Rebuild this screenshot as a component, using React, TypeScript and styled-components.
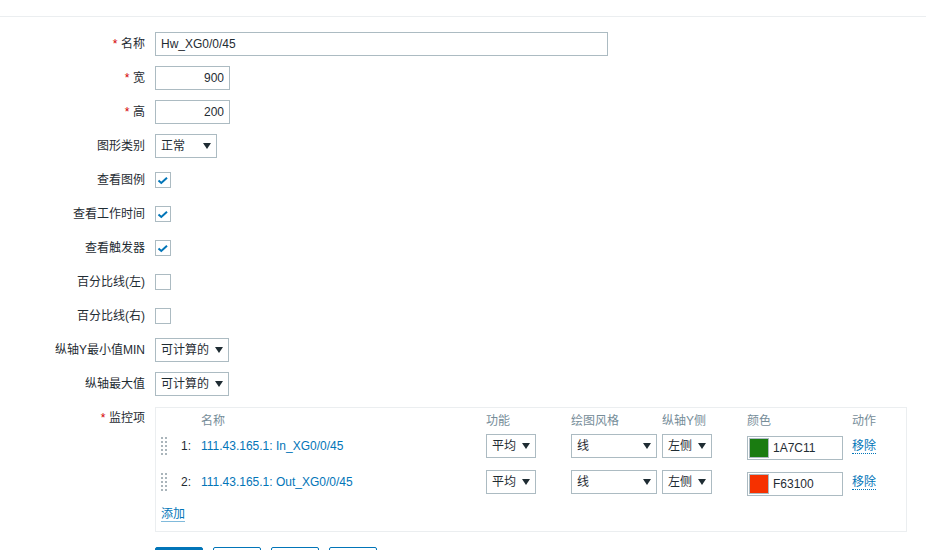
import React from 'react';
import styled, { createGlobalStyle, css } from 'styled-components';

const GlobalStyle = createGlobalStyle`
  body {
    margin: 0;
    background: #fff;
    font-family: "Liberation Sans", Arial, "Noto Sans CJK SC", sans-serif;
    font-size: 12px;
    color: #1f2c33;
  }
`;

const TopBar = styled.div`
  height: 16px;
  border-bottom: 1px solid #ebeef0;
`;

const Form = styled.ul`
  list-style: none;
  margin: 0;
  padding: 10px 0 0;
`;

const Row = styled.li<{ $top?: boolean }>`
  display: grid;
  grid-template-columns: 145px 1fr;
  column-gap: 10px;
  padding: 5px 0;
  align-items: ${(p) => (p.$top ? 'start' : 'center')};
`;

const Label = styled.label<{ $required?: boolean }>`
  text-align: right;
  line-height: 24px;
  white-space: nowrap;
  ${(p) =>
    p.$required &&
    css`
      &::before {
        content: '*';
        color: #d40000;
        margin-right: 0.3em;
      }
    `}
`;

const Field = styled.div`
  display: flex;
  align-items: center;
  min-height: 24px;
`;

const TextInput = styled.input<{ $width: number; $align?: string }>`
  box-sizing: border-box;
  width: ${(p) => p.$width}px;
  height: 24px;
  margin: 0;
  padding: 0 5px;
  border: 1px solid #acbbc2;
  background: #fff;
  font: inherit;
  color: #1f2c33;
  text-align: ${(p) => p.$align || 'left'};
  outline: none;
`;

const Select = styled.div<{ $width: number }>`
  position: relative;
  box-sizing: border-box;
  width: ${(p) => p.$width}px;
  height: 24px;
  padding: 0 18px 0 5px;
  border: 1px solid #acbbc2;
  background: #fff;
  line-height: 22px;
  white-space: nowrap;

  &::after {
    content: '';
    position: absolute;
    right: 5px;
    top: 8px;
    border-left: 4px solid transparent;
    border-right: 4px solid transparent;
    border-top: 6px solid #1f2c33;
  }
`;

const CheckBox = styled.span`
  box-sizing: border-box;
  display: inline-flex;
  width: 16px;
  height: 16px;
  border: 1px solid #acbbc2;
  background: #fff;
`;

const Check = ({ checked }: { checked?: boolean }) => (
  <CheckBox>
    {checked && (
      <svg width="14" height="14" viewBox="0 0 14 14">
        <path
          d="M2.5 7.5 L5.3 10 L11 4.8"
          fill="none"
          stroke="#0275b8"
          strokeWidth="2"
        />
      </svg>
    )}
  </CheckBox>
);

const itemCols = css`
  display: grid;
  grid-template-columns: 20px 20px 285px 85px 91px 85px 105px 1fr;
`;

const ItemsBox = styled.div`
  box-sizing: border-box;
  width: 752px;
  margin-top: 1px;
  padding: 0 5px;
  border: 1px solid #ebeef0;
`;

const HeadRow = styled.div`
  ${itemCols};
  padding-top: 6px;
  line-height: 14px;
  color: #768d99;
`;

const ItemRow = styled.div`
  ${itemCols};
  align-items: center;
  height: 24px;
  padding: 6px 0;
`;

const HeadCell = styled.div<{ $col: number }>`
  grid-column: ${(p) => p.$col};
  white-space: nowrap;
`;

const Handle = styled.svg`
  display: block;
`;

const Num = styled.span`
  white-space: nowrap;
`;

const ItemName = styled.a`
  color: #0275b8;
  text-decoration: none;
  white-space: nowrap;
`;

const ColorBox = styled.div`
  box-sizing: border-box;
  display: flex;
  align-items: center;
  width: 96px;
  height: 24px;
  margin: 2px 0 -2px;
  padding-left: 1px;
  border: 1px solid #acbbc2;
  background: #fff;
`;

const Swatch = styled.span<{ $color: string }>`
  box-sizing: border-box;
  width: 20px;
  height: 20px;
  margin-right: 4px;
  border: 1px solid #acbbc2;
  background: ${(p) => p.$color};
`;

const LinkButton = styled.a<{ $dotted?: boolean }>`
  display: inline-block;
  line-height: 14px;
  color: #0275b8;
  text-decoration: none;
  cursor: pointer;
  border-bottom: ${(p) =>
    p.$dotted ? '1px dotted #0275b8' : '1px solid rgba(2, 117, 184, 0.5)'};
`;

const Footer = styled.div`
  padding: 7px 0 9px;
  line-height: 14px;
`;

const Buttons = styled.div`
  grid-column: 2;
  display: flex;
  gap: 10px;
`;

const Button = styled.button<{ $primary?: boolean }>`
  height: 24px;
  margin: 0;
  padding: 0 11px;
  border: 1px solid #0275b8;
  border-radius: 2px;
  font: inherit;
  background: ${(p) => (p.$primary ? '#0275b8' : '#fff')};
  color: ${(p) => (p.$primary ? '#fff' : '#0275b8')};
`;

const ButtonRow = styled.li`
  display: grid;
  grid-template-columns: 145px 1fr;
  column-gap: 10px;
  padding: 10px 0 5px;
`;

const DragIcon = () => (
  <Handle width="6" height="18" viewBox="0 0 6 18">
    {[0, 4, 8, 12, 16].map((y) =>
      [0, 4].map((x) => (
        <rect key={`${x}-${y}`} x={x} y={y} width="2" height="2" fill="#aab5bb" />
      ))
    )}
  </Handle>
);

const items = [
  { name: '111.43.165.1: In_XG0/0/45', color: '1A7C11' },
  { name: '111.43.165.1: Out_XG0/0/45', color: 'F63100' },
];

const checks: [string, boolean][] = [
  ['查看图例', true],
  ['查看工作时间', true],
  ['查看触发器', true],
  ['百分比线(左)', false],
  ['百分比线(右)', false],
];

export default function App() {
  return (
    <>
      <GlobalStyle />
      <TopBar />
      <Form>
        <Row>
          <Label $required>名称</Label>
          <Field>
            <TextInput $width={453} value="Hw_XG0/0/45" readOnly />
          </Field>
        </Row>
        <Row>
          <Label $required>宽</Label>
          <Field>
            <TextInput $width={75} $align="right" value="900" readOnly />
          </Field>
        </Row>
        <Row>
          <Label $required>高</Label>
          <Field>
            <TextInput $width={75} $align="right" value="200" readOnly />
          </Field>
        </Row>
        <Row>
          <Label>图形类别</Label>
          <Field>
            <Select $width={62}>正常</Select>
          </Field>
        </Row>
        {checks.map(([label, on]) => (
          <Row key={label}>
            <Label>{label}</Label>
            <Field>
              <Check checked={on} />
            </Field>
          </Row>
        ))}
        <Row>
          <Label>纵轴Y最小值MIN</Label>
          <Field>
            <Select $width={74}>可计算的</Select>
          </Field>
        </Row>
        <Row>
          <Label>纵轴最大值</Label>
          <Field>
            <Select $width={74}>可计算的</Select>
          </Field>
        </Row>
        <Row $top>
          <Label $required>监控项</Label>
          <ItemsBox>
            <HeadRow>
              <HeadCell $col={3}>名称</HeadCell>
              <HeadCell $col={4}>功能</HeadCell>
              <HeadCell $col={5}>绘图风格</HeadCell>
              <HeadCell $col={6}>纵轴Y侧</HeadCell>
              <HeadCell $col={7}>颜色</HeadCell>
              <HeadCell $col={8}>动作</HeadCell>
            </HeadRow>
            {items.map((item, i) => (
              <ItemRow key={item.name}>
                <DragIcon />
                <Num>{i + 1}:</Num>
                <ItemName>{item.name}</ItemName>
                <Select $width={50}>平均</Select>
                <Select $width={86}>线</Select>
                <Select $width={50}>左侧</Select>
                <ColorBox>
                  <Swatch $color={`#${item.color}`} />
                  {item.color}
                </ColorBox>
                <div>
                  <LinkButton $dotted>移除</LinkButton>
                </div>
              </ItemRow>
            ))}
            <Footer>
              <LinkButton>添加</LinkButton>
            </Footer>
          </ItemsBox>
        </Row>
        <ButtonRow>
          <Buttons>
            <Button $primary>更新</Button>
            <Button>克隆</Button>
            <Button>删除</Button>
            <Button>取消</Button>
          </Buttons>
        </ButtonRow>
      </Form>
    </>
  );
}
